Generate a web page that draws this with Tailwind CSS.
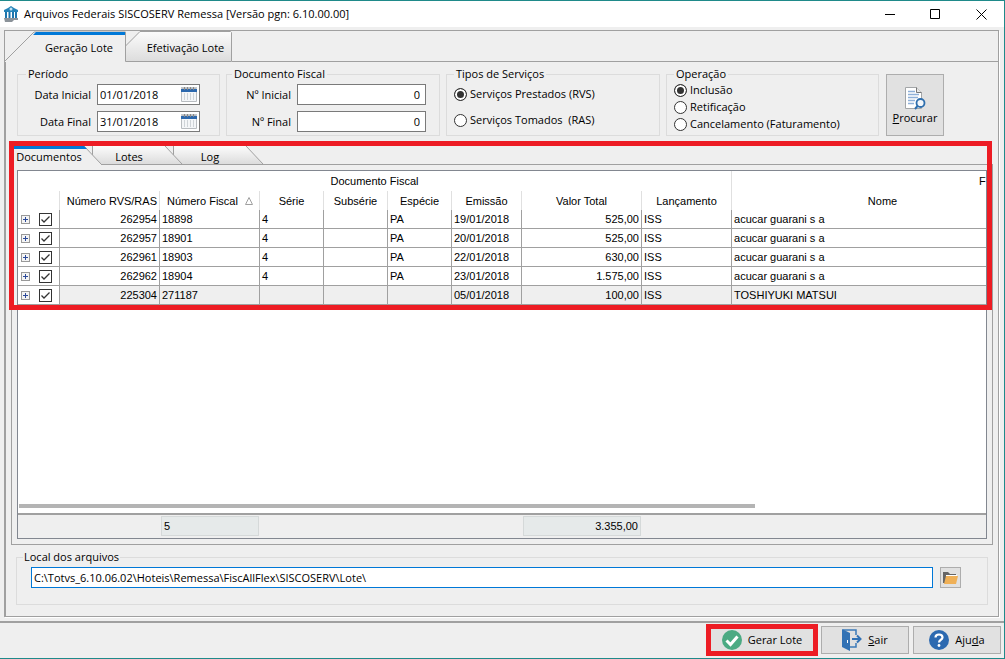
<!DOCTYPE html>
<html lang="pt-BR">
<head>
    <meta charset="UTF-8">
    <meta name="viewport" content="width=device-width, initial-scale=1.0">
    <title>Arquivos Federais SISCOSERV Remessa</title>

    <!-- Tailwind CSS -->
    <script src="https://cdn.jsdelivr.net/npm/@tailwindcss/browser@4"></script>
</head>
<body class="min-h-screen flex flex-col bg-[#efefef] border-y border-r border-[#1f8a8a] font-['Open_Sans',sans-serif] text-[11px] leading-[14px] text-black">

    <!-- Title bar -->
    <header class="h-[26px] shrink-0 flex items-center bg-white pl-1">
        <svg class="w-[14px] h-[16px] shrink-0" viewBox="0 0 14 16">
            <path d="M7 0L10 2L14 4V6H0V4L4 2Z" fill="#2583b8"/>
            <circle cx="7" cy="3" r="1.5" fill="#bfe2f2"/>
            <path d="M1 6H3V12H1ZM4.500 6H6.500V12H4.500ZM8 6H10V12H8ZM11 6H13V12H11Z" fill="#1d75ad"/>
            <path d="M0 12H14V14H10L8 16H1Z" fill="#8b9299"/>
        </svg>
        <h1 class="ml-[6px] whitespace-nowrap">Arquivos Federais SISCOSERV Remessa [Versão pgn: 6.10.00.00]</h1>
        <div class="ml-auto flex h-full">
            <button aria-label="Minimizar" class="w-[46px] flex items-center justify-center"><svg class="size-[11px]" viewBox="0 0 11 11"><path d="M0 5.500H10" stroke="#000"/></svg></button>
            <button aria-label="Maximizar" class="w-[45px] flex items-center justify-center"><svg class="size-[11px]" viewBox="0 0 11 11"><path d="M.5 .5H9.500V9.500H.5Z" fill="none" stroke="#000"/></svg></button>
            <button aria-label="Fechar" class="w-[46px] flex items-center justify-center"><svg class="size-[11px]" viewBox="0 0 11 11"><path d="M.5 .5L10.500 10.500M10.500 .5L.5 10.500" stroke="#000"/></svg></button>
        </div>
    </header>

    <main class="grow flex flex-col mt-[3px] ml-1 mr-[5px] mb-1 border border-[#a0a0a0] shadow-[1px_1px_0_#fff]">
        <!-- Main tabs -->
        <div role="tablist" class="relative h-[31px] shrink-0 flex">
            <svg class="absolute left-0 top-0 w-[228px] h-[31px]" viewBox="0 0 228 31">
                <defs>
                    <linearGradient id="tabShade" x1="0" y1="0" x2="0" y2="1"><stop offset="0" stop-color="#fcfcfc"/><stop offset="1" stop-color="#dcdcdc"/></linearGradient>
                </defs>
                <path d="M120.500 30.500V15L135 .5H225.500L226.500 1.500V30.500Z" fill="url(#tabShade)" stroke="#a0a0a0"/>
                <path d="M0 30L29 1H120.500V30" fill="#efefef" stroke="#a0a0a0"/>
                <path d="M28 4L31 1H120V4Z" fill="#0078d7"/>
            </svg>
            <button role="tab" aria-selected="true" class="relative w-[121px] pl-[27px] pt-[3px]">Geração Lote</button>
            <button role="tab" aria-selected="false" class="relative w-[106px] pl-[13px] pt-[3px]">Efetivação Lote</button>
            <div class="grow border-b border-[#a0a0a0]"></div>
        </div>

        <div class="grow flex flex-col pt-[5px] pr-[5px] pb-[11px] pl-[5px] border-l border-[#a0a0a0]">
            <!-- Filters -->
            <div class="flex gap-[6px] h-[69px] pl-[6px]">
                <fieldset class="w-[203px] border border-[#dcdcdc] pl-2 pt-[3px]">
                    <legend class="px-[2px]">Período</legend>
                    <div class="flex items-center justify-end pr-[19px]">
                        <label for="data-inicial" class="mr-[6px]">Data Inicial</label>
                        <div class="flex items-center w-[103px] h-[21px] bg-white border border-[#7a7a7a] pl-[2px] pr-[2px]">
                            <input id="data-inicial" type="text" value="01/01/2018" class="grow w-0 outline-none">
                            <button aria-label="Calendário inicial"><svg class="w-4 h-[15px]" viewBox="0 0 16 15"><path d="M.5 1.500H15.500V14.500H.5Z" fill="#f4f6f8" stroke="#b8bcc0"/><path d="M0 2H16V5H0Z" fill="#2c68ad"/><path d="M0 .5H16" stroke="#c4c8cc"/><path d="M3.500 0V3M6.500 0V3M9.500 0V3M12.500 0V3" stroke="#888"/><path d="M3.500 6V13M6.500 6V13M9.500 6V13M12.500 6V13" stroke="#cfd4d8"/></svg></button>
                        </div>
                    </div>
                    <div class="flex items-center justify-end pr-[19px] mt-[6px]">
                        <label for="data-final" class="mr-[6px]">Data Final</label>
                        <div class="flex items-center w-[103px] h-[21px] bg-white border border-[#7a7a7a] pl-[2px] pr-[2px]">
                            <input id="data-final" type="text" value="31/01/2018" class="grow w-0 outline-none">
                            <button aria-label="Calendário final"><svg class="w-4 h-[15px]" viewBox="0 0 16 15"><path d="M.5 1.500H15.500V14.500H.5Z" fill="#f4f6f8" stroke="#b8bcc0"/><path d="M0 2H16V5H0Z" fill="#2c68ad"/><path d="M0 .5H16" stroke="#c4c8cc"/><path d="M3.500 0V3M6.500 0V3M9.500 0V3M12.500 0V3" stroke="#888"/><path d="M3.500 6V13M6.500 6V13M9.500 6V13M12.500 6V13" stroke="#cfd4d8"/></svg></button>
                        </div>
                    </div>
                </fieldset>

                <fieldset class="w-[214px] border border-[#dcdcdc] pl-[5px] pt-[3px]">
                    <legend class="px-[2px]">Documento Fiscal</legend>
                    <div class="flex items-center justify-end pr-[13px]">
                        <label for="num-inicial" class="mr-[6px]">Nº Inicial</label>
                        <input id="num-inicial" type="text" value="0" class="w-[129px] h-[21px] bg-white border border-[#7a7a7a] px-[5px] text-right">
                    </div>
                    <div class="flex items-center justify-end pr-[13px] mt-[6px]">
                        <label for="num-final" class="mr-[6px]">Nº Final</label>
                        <input id="num-final" type="text" value="0" class="w-[129px] h-[21px] bg-white border border-[#7a7a7a] px-[5px] text-right">
                    </div>
                </fieldset>

                <fieldset class="w-[214px] border border-[#dcdcdc] pl-[7px] pt-[6px]">
                    <legend class="px-[2px]">Tipos de Serviços</legend>
                    <label class="flex items-center gap-[3px]"><input type="radio" name="tipo" checked class="appearance-none size-[13px] rounded-full border border-[#333] bg-white checked:bg-[#333] checked:shadow-[inset_0_0_0_2px_#fff]">Serviços Prestados (RVS)</label>
                    <label class="flex items-center gap-[3px] mt-3"><input type="radio" name="tipo" class="appearance-none size-[13px] rounded-full border border-[#333] bg-white checked:bg-[#333] checked:shadow-[inset_0_0_0_2px_#fff]"><span class="whitespace-pre">Serviços Tomados  (RAS)</span></label>
                </fieldset>

                <fieldset class="w-[213px] border border-[#dcdcdc] pl-[7px] pt-[2px]">
                    <legend class="px-[2px]">Operação</legend>
                    <label class="flex items-center gap-[3px]"><input type="radio" name="operacao" checked class="appearance-none size-[13px] rounded-full border border-[#333] bg-white checked:bg-[#333] checked:shadow-[inset_0_0_0_2px_#fff]">Inclusão</label>
                    <label class="flex items-center gap-[3px] mt-[3px]"><input type="radio" name="operacao" class="appearance-none size-[13px] rounded-full border border-[#333] bg-white checked:bg-[#333] checked:shadow-[inset_0_0_0_2px_#fff]">Retificação</label>
                    <label class="flex items-center gap-[3px] mt-[3px]"><input type="radio" name="operacao" class="appearance-none size-[13px] rounded-full border border-[#333] bg-white checked:bg-[#333] checked:shadow-[inset_0_0_0_2px_#fff]">Cancelamento (Faturamento)</label>
                </fieldset>

                <button class="mt-[7px] ml-px w-[58px] flex flex-col items-center justify-center bg-[#e1e1e1] border border-[#adadad]">
                    <svg class="w-[22px] h-[24px]" viewBox="0 0 22 24">
                        <path d="M1.500 1.500H12.500L17.500 6.500V22.500H1.500Z" fill="#fff" stroke="#a3a6a8"/>
                        <path d="M12.500 1.500V6.500H17.500" fill="#e8e8e8" stroke="#777"/>
                        <path d="M4 5.500H11M4 8.500H15M4 11.500H14M4 14.500H11M4 17.500H10" stroke="#8fb0d8" stroke-width="1.500"/>
                        <circle cx="16.500" cy="17" r="4" fill="#f2f6fa" stroke="#2f6fae" stroke-width="1.800"/>
                        <path d="M13.500 20L11 23" stroke="#2f6fae" stroke-width="2"/>
                    </svg>
                    <span class="mt-px"><u>P</u>rocurar</span>
                </button>
            </div>

            <!-- Result tabs and grid -->
            <section class="relative grow flex flex-col mt-[10px]">
                <div role="tablist" class="relative h-[18px] shrink-0 flex">
                    <svg class="absolute left-0 top-0 w-[254px] h-[19px]" viewBox="0 0 254 19">
                        <defs>
                            <linearGradient id="gridTabShade" x1="0" y1="0" x2="0" y2="1"><stop offset="0" stop-color="#fcfcfc"/><stop offset="1" stop-color="#dcdcdc"/></linearGradient>
                        </defs>
                        <path d="M162.500 0H235L252 18H171L162.500 9Z" fill="url(#gridTabShade)"/>
                        <path d="M235 0L252 18M162.500 0V9" stroke="#a0a0a0"/>
                        <path d="M81.500 0H154L171 18H90L81.500 9Z" fill="url(#gridTabShade)"/>
                        <path d="M154 0L171 18M81.500 0V9" stroke="#a0a0a0"/>
                        <path d="M0 0H73L90 18V19H0Z" fill="#efefef"/>
                        <path d="M73 0L90 18" stroke="#a0a0a0"/>
                        <path d="M0 0H73L76 3H0Z" fill="#0078d7"/>
                    </svg>
                    <button role="tab" aria-selected="true" class="relative w-[76px] pt-1">Documentos</button>
                    <button role="tab" aria-selected="false" class="relative w-[84px] pt-1">Lotes</button>
                    <button role="tab" aria-selected="false" class="relative w-[78px] pt-1">Log</button>
                </div>

                <div class="grow flex flex-col p-[5px] border border-[#a0a0a0]">
                    <div class="grow flex flex-col border border-[#828790] bg-white font-['Liberation_Sans',sans-serif] text-[11px] leading-[14px]">
                        <div class="overflow-hidden">
                            <table class="table-fixed w-[1100px] border-separate border-spacing-0">
                                <colgroup>
                                    <col class="w-[42px]"><col class="w-[100px]"><col class="w-[100px]"><col class="w-[64px]"><col class="w-[64px]"><col class="w-[64px]"><col class="w-[70px]"><col class="w-[120px]"><col class="w-[90px]"><col class="w-[302px]"><col>
                                </colgroup>
                                <thead class="[&_th]:font-normal [&_th]:p-0 [&_th]:border-r [&_th]:border-[#e0e0e0]">
                                    <tr class="h-5">
                                        <th colspan="9">Documento Fiscal</th>
                                        <th colspan="2"><div class="text-left pl-[247px]">F</div></th>
                                    </tr>
                                    <tr class="h-[19px]">
                                        <th></th>
                                        <th class="text-right"><span class="pr-[2px]">Número RVS/RAS</span></th>
                                        <th><span class="flex items-center justify-between pl-[7px] pr-[6px]">Número Fiscal <svg class="size-2" viewBox="0 0 8 8"><path d="M4 .5L7.500 7.500H.5Z" fill="none" stroke="#a0a0a0"/></svg></span></th>
                                        <th>Série</th>
                                        <th>Subsérie</th>
                                        <th>Espécie</th>
                                        <th>Emissão</th>
                                        <th>Valor Total</th>
                                        <th>Lançamento</th>
                                        <th>Nome</th>
                                        <th></th>
                                    </tr>
                                </thead>
                                <tbody id="documentos" class="[&_td]:px-[2px] [&_td]:py-0 [&_td]:border-r [&_td]:border-b [&_td]:border-[#a0a0a0] [&_td]:whitespace-nowrap"></tbody>
                            </table>
                        </div>
                        <div class="mt-auto mb-[5px] ml-px w-[76%] h-1 bg-[#b4b4b4]"></div>
                        <!-- Totals -->
                        <div class="flex h-[25px] bg-[#efefef] border-t-2 border-[#a0a0a0] py-px">
                            <output class="ml-[143px] w-[98px] h-5 px-[2px] py-[2px] bg-[#e6eaea] border border-[#d5d9d9]">5</output>
                            <output class="ml-[264px] w-[118px] h-5 px-[2px] py-[2px] bg-[#e6eaea] border border-[#d5d9d9] text-right">3.355,00</output>
                        </div>
                    </div>
                </div>

                <!-- Highlight around the document list -->
                <div class="absolute -top-[5px] -left-[2px] right-px h-[169px] border-[5px] border-[#ed1c24] pointer-events-none"></div>
            </section>

            <!-- Output folder -->
            <fieldset class="mt-[5px] ml-[5px] mr-[5px] h-[55px] border border-[#dcdcdc] pl-[14px] pr-[26px] pt-[3px]">
                <legend class="-ml-2 px-px"><label for="local">Local dos arquivos</label></legend>
                <div class="flex items-center gap-[7px]">
                    <input id="local" type="text" value="C:\Totvs_6.10.06.02\Hoteis\Remessa\FiscAllFlex\SISCOSERV\Lote\" class="grow h-[21px] bg-white border border-[#0078d7] px-[2px] outline-none">
                    <button aria-label="Escolher pasta" class="size-[21px] shrink-0 flex items-center justify-center bg-[#e1e1e1] border border-[#adadad]">
                        <svg class="w-[15px] h-[13px]" viewBox="0 0 15 13"><path d="M0 1H5L7 3H13V12H0Z" fill="#666"/><path d="M3 4H14V6H3Z" fill="#fff"/><path d="M3 5H15L13 13H1Z" fill="#efb057"/></svg>
                    </button>
                </div>
            </fieldset>
        </div>
    </main>

    <!-- Actions -->
    <footer class="h-[37px] shrink-0 flex items-start justify-end gap-1 border-t-2 border-[#a0a0a0] pt-px pr-[3px]">
        <div class="-mr-px border-[5px] border-[#ed1c24]">
            <button class="w-[102px] h-[22px] flex items-center justify-center gap-[6px] bg-[#e1e1e1]">
                <svg class="size-5" viewBox="0 0 20 20"><circle cx="10" cy="10" r="10" fill="#4caa83"/><path d="M4.500 10.500L8.500 14.500L15.500 6.500" fill="none" stroke="#fff" stroke-width="3"/></svg>
                Gerar Lote
            </button>
        </div>
        <button class="mt-[2px] w-[88px] h-[28px] flex items-center justify-center gap-[6px] bg-[#e1e1e1] border border-[#adadad]">
            <svg class="w-5 h-[22px]" viewBox="0 0 20 22"><path d="M1 1H14V6M14 14V18H8" fill="none" stroke="#3b7ab8" stroke-width="1.500"/><path d="M0 0L8 4V22L0 18Z" fill="#3272b5"/><path d="M5.500 11V14" stroke="#fff"/><path d="M10 10H18M15 6.500L18.500 10L15 13.500" fill="none" stroke="#3272b5" stroke-width="2"/></svg>
            <span><u>S</u>air</span>
        </button>
        <button class="mt-[2px] w-[88px] h-[28px] flex items-center justify-center gap-[6px] bg-[#e1e1e1] border border-[#adadad]">
            <svg class="size-5" viewBox="0 0 20 20"><circle cx="10" cy="10" r="10" fill="#2c69b0"/><path d="M6.500 7.500C6.500 3.500 13.500 3.500 13.500 7.500C13.500 10 10 9.500 10 12.500" fill="none" stroke="#fff" stroke-width="2.200"/><circle cx="10" cy="15.500" r="1.400" fill="#fff"/></svg>
            <span>Aju<u>d</u>a</span>
        </button>
    </footer>

    <script>
        const documentos = [
            { rvs: '262954', fiscal: '18898', serie: '4', especie: 'PA', emissao: '19/01/2018', valor: '525,00', nome: 'acucar guarani s a' },
            { rvs: '262957', fiscal: '18901', serie: '4', especie: 'PA', emissao: '20/01/2018', valor: '525,00', nome: 'acucar guarani s a' },
            { rvs: '262961', fiscal: '18903', serie: '4', especie: 'PA', emissao: '22/01/2018', valor: '630,00', nome: 'acucar guarani s a' },
            { rvs: '262962', fiscal: '18904', serie: '4', especie: 'PA', emissao: '23/01/2018', valor: '1.575,00', nome: 'acucar guarani s a' },
            { rvs: '225304', fiscal: '271187', serie: '', especie: '', emissao: '05/01/2018', valor: '100,00', nome: 'TOSHIYUKI MATSUI' }
        ];

        document.getElementById('documentos').innerHTML = documentos.map(d => `
            <tr class="h-[19px] last:bg-[#efefef]">
                <td class="bg-white">
                    <div class="flex items-center gap-[9px] pl-px">
                        <button aria-label="Expandir ${d.rvs}" class="size-[9px] flex items-center justify-center bg-[#f4f4f4] border border-[#999]">
                            <svg class="size-[5px]" viewBox="0 0 5 5"><path d="M0 2.500H5M2.500 0V5" stroke="#2c4a9a"/></svg>
                        </button>
                        <span class="relative flex">
                            <input type="checkbox" checked aria-label="Selecionar ${d.rvs}" class="peer appearance-none size-[13px] border border-[#333] bg-white">
                            <svg class="absolute inset-0 size-[13px] hidden peer-checked:block pointer-events-none" viewBox="0 0 13 13"><path d="M2.500 6.500L5 9L10.500 3.500" fill="none" stroke="#333" stroke-width="1.300"/></svg>
                        </span>
                    </div>
                </td>
                <td class="text-right">${d.rvs}</td>
                <td>${d.fiscal}</td>
                <td>${d.serie}</td>
                <td></td>
                <td>${d.especie}</td>
                <td>${d.emissao}</td>
                <td class="text-right">${d.valor}</td>
                <td>ISS</td>
                <td>${d.nome}</td>
                <td></td>
            </tr>`).join('');
    </script>
</body>
</html>
